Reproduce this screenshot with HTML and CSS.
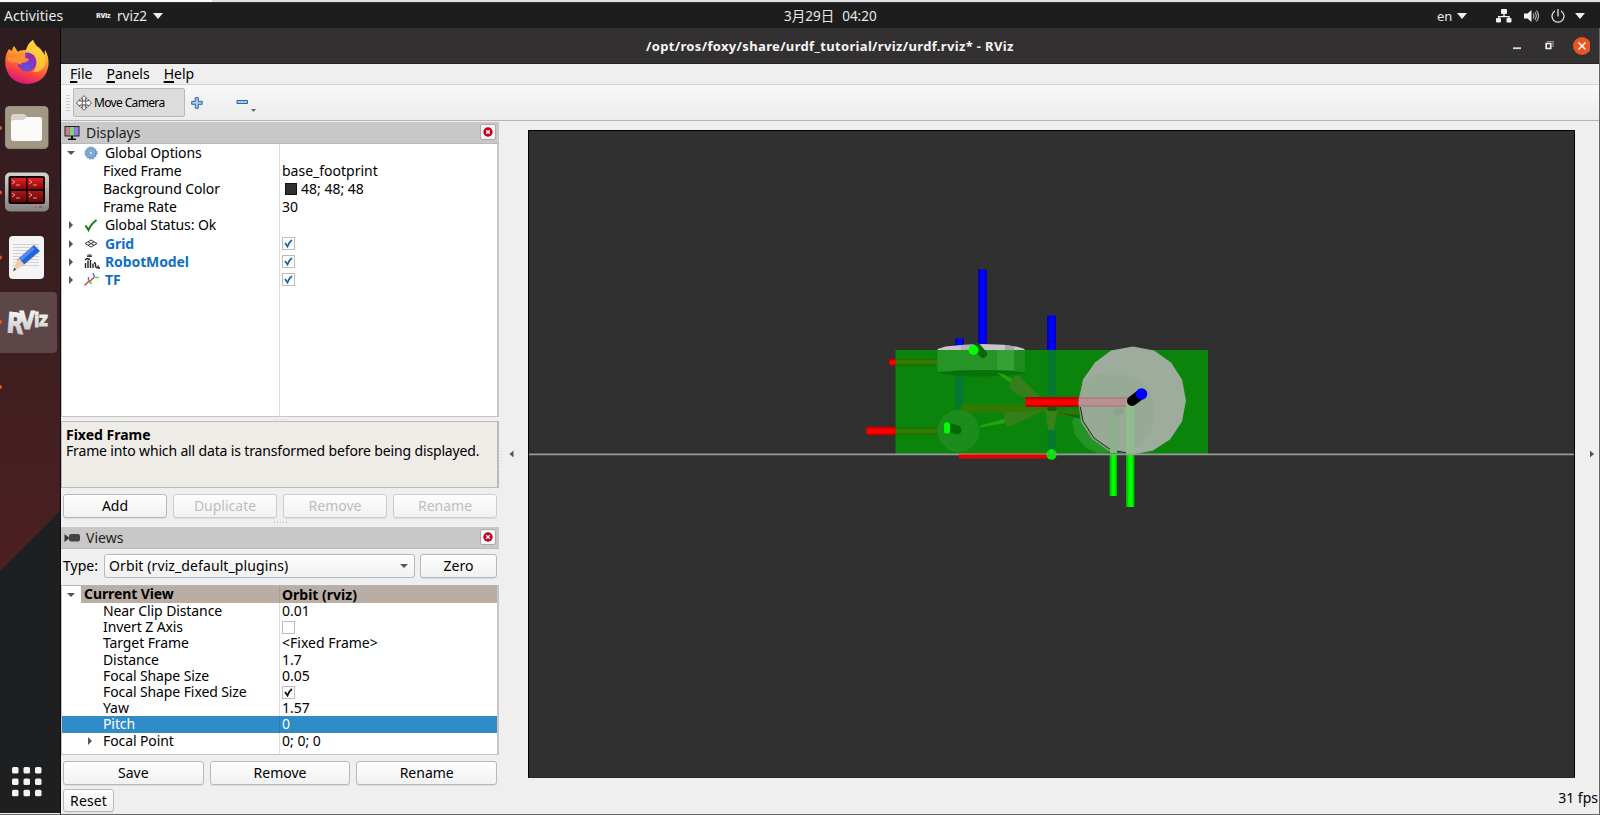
FILE: index.html
```html
<!DOCTYPE html>
<html lang="en">
<head>
<meta charset="utf-8">
<title>RViz</title>
<link rel="stylesheet" href="styles.css">
</head>
<body>
<div class="desktop">
  <div class="host-strip"><span></span></div>
  <header class="topbar">
    <span class="activities">Activities</span>
    <span class="app-menu"><i class="mini-logo">RViz</i><b class="app-name">rviz2</b>
      <svg width="10" height="6"><path d="M0 0h10l-5 6z" fill="#eee"/></svg></span>
    <span class="clock"><span>3月29日</span><span>04:20</span></span>
    <span class="status">
      <span class="lang">en</span>
      <svg class="caret" width="10" height="6"><path d="M0 0h10l-5 6z" fill="#eee"/></svg>
      <svg class="net" width="16" height="14" viewBox="0 0 16 14" fill="#f2f2f2"><rect x="5" y="0" width="6" height="5" rx="1"/><rect x="0" y="9" width="5" height="4.5" rx="1"/><rect x="10.500" y="9" width="5" height="4.500" rx="1"/><path d="M7.300 5h1.400v2h5v2h-1.400v-.8H3.300V9H2V7h5.300z"/></svg>
      <svg class="vol" width="15" height="14" viewBox="0 0 15 14"><path d="M0 4.500h3.500L7.500 1v12L3.500 9.500H0z" fill="#f2f2f2"/><path d="M9 4.500q1.800 2.500 0 5M10.800 3q3 4 0 8M12.500 1.500q4 5.500 0 11" fill="none" stroke="#bbb" stroke-width="1.100"/></svg>
      <svg class="power" width="14" height="14" viewBox="0 0 14 14" fill="none" stroke="#e4e4e4" stroke-width="1.300"><path d="M4 2a6 6 0 1 0 6 0M7 0v7.500"/></svg>
      <svg class="caret" width="10" height="6"><path d="M0 0h10l-5 6z" fill="#eee"/></svg>
    </span>
  </header>

  <div class="work">
    <aside class="dock">
      <svg width="61" height="786" viewBox="0 28 61 786">
        <defs>
          <linearGradient id="maroon" x1="0" y1="0" x2="0" y2="1"><stop offset="0" stop-color="#2f1c1f"/><stop offset=".5" stop-color="#3b1e20"/><stop offset="1" stop-color="#4c2022"/></linearGradient>
          <linearGradient id="fox" x1=".7" y1="0" x2=".35" y2="1"><stop offset="0" stop-color="#fff04c"/><stop offset=".4" stop-color="#ff9a2b"/><stop offset=".7" stop-color="#fb4a3f"/><stop offset="1" stop-color="#dc107a"/></linearGradient>
          <radialGradient id="globe" cx=".5" cy=".8"><stop offset="0" stop-color="#5a55e8"/><stop offset="1" stop-color="#8b2fb6"/></radialGradient>
          <linearGradient id="frame" x1="0" y1="0" x2="0" y2="1"><stop offset="0" stop-color="#d5d3d0"/><stop offset="1" stop-color="#85827f"/></linearGradient>
          <linearGradient id="pane" x1="0" y1="0" x2="0" y2="1"><stop offset="0" stop-color="#e02426"/><stop offset="1" stop-color="#8c0508"/></linearGradient>
          <linearGradient id="letters" x1="0" y1="0" x2="0" y2="1"><stop offset="0" stop-color="#fff"/><stop offset="1" stop-color="#bdbdbd"/></linearGradient>
        </defs>
        <path d="M0 28h61v785H0z" fill="#1e1f20"/>
        <path d="M0 28h61v482L0 571z" fill="url(#maroon)"/>
        <path d="M60.500 28v786" stroke="#0a0808"/>
        <!-- Firefox -->
        <path d="M33 40q-5 3-7 10-7 0-8 2l-4-6q-2 2-2 5l-3-2Q4 56 5.500 66 9 83 27 84q19-1 21.500-19Q49 56 45 50q-1 2 0 5-5-6-9-9-2-3-3-6z" fill="url(#fox)"/>
        <path d="M33 40q-5 4-7 11 9 2 10 10 1 7-3 11 9 1 12-7 2-9-5-17-5-3-7-8z" fill="#ffd23c" opacity=".75"/>
        <circle cx="27" cy="62" r="9.500" fill="url(#globe)"/>
        <path d="M7 58q4-2 9-1 4-6 9-4 1 2 0 5 4 0 4 2-3 3-8 3 2 4-5-1Q9 64 7 58z" fill="#ff8c2e"/>
        <!-- Files -->
        <rect x="5" y="106" width="43.500" height="43" rx="4.500" fill="#918b79"/>
        <rect x="5.500" y="106.500" width="42.500" height="41" rx="4" fill="#9f9986"/>
        <path d="M11 117q0-3 3-3h9q3 0 4 3h12q3 0 3 3v18q0 3-3 3H14q-3 0-3-3z" fill="#d8d4cc"/>
        <path d="M11 122q0-2 3-2h9l4-3h12q3 0 3 3v18q0 3-3 3H14q-3 0-3-3z" fill="#fbfaf9"/>
        <!-- Terminator -->
        <rect x="5" y="172.500" width="44" height="39" rx="5" fill="url(#frame)"/>
        <rect x="8.500" y="176" width="36.500" height="28" rx="2" fill="#160303"/>
        <g fill="url(#pane)"><path d="M11 178h15v11H11zM27.500 178H43v11H27.500z"/><path d="M11 191h15v11H11zM27.500 191H43v11H27.500z" opacity=".7"/></g>
        <path d="M12 180l3 2-3 2m4 1h4M29 180l3 2-3 2m4 1h4M12 193l3 2-3 2m4 1h4M29 193l3 2-3 2m4 1h4" fill="none" stroke="#f0a8a4" stroke-width=".9"/>
        <circle cx="35.500" cy="207" r="1" fill="#f33"/><path d="M39 207h3" stroke="#555"/>
        <!-- Text editor -->
        <rect x="9" y="236" width="35" height="43" rx="4" fill="#f4f4f4"/>
        <path d="M13 244.500h26M13 247.500h26M13 250.500h26M13 253.500h26M13 256.500h26M13 259.500h26M13 262.500h26M13 265.500h26" stroke="#c9c9c9" stroke-width=".8"/>
        <path d="M34 245l6 6-17.500 15-5.500-6z" fill="#2562dc"/><path d="M32.500 247l2.500 2-16 14-2-3z" fill="#5389f2"/>
        <path d="M18.500 258l6 6.500L13 271.500z" fill="#f0cba7"/><path d="M14.300 267.500l1.800 2-3.100 2z" fill="#444"/>
        <!-- RViz -->
        <path d="M0 292h53q4 0 4 4v53q0 4-4 4H0z" fill="#5d4647"/>
        <g class="logo" fill="url(#letters)" stroke="url(#letters)" stroke-width="1">
          <text transform="translate(6 332) scale(.8 1)"><tspan x="0" y="0" font-size="28" rotate="6">R</tspan><tspan x="17" y="-3" font-size="25">V</tspan><tspan x="35" y="-5" font-size="20">i</tspan><tspan x="41" y="-6" font-size="20">z</tspan></text>
        </g>
        <g fill="#e95420"><circle cx="0" cy="128" r="2"/><circle cx="0" cy="192.500" r="2"/><circle cx="0" cy="257.500" r="2"/><circle cx="0" cy="322" r="2"/><circle cx="0" cy="387" r="2"/></g>
        <g fill="#f3f3f3"><rect x="12" y="767" width="6.500" height="6.500" rx="1.500"/><rect x="23.500" y="767" width="6.500" height="6.500" rx="1.500"/><rect x="35" y="767" width="6.500" height="6.500" rx="1.500"/><rect x="12" y="778.500" width="6.500" height="6.500" rx="1.500"/><rect x="23.500" y="778.500" width="6.500" height="6.500" rx="1.500"/><rect x="35" y="778.500" width="6.500" height="6.500" rx="1.500"/><rect x="12" y="789.700" width="6.500" height="6.500" rx="1.500"/><rect x="23.500" y="789.700" width="6.500" height="6.500" rx="1.500"/><rect x="35" y="789.700" width="6.500" height="6.500" rx="1.500"/></g>
      </svg>
    </aside>

    <section class="window">
      <div class="titlebar">
        <span class="title">/opt/ros/foxy/share/urdf_tutorial/rviz/urdf.rviz* - RViz</span>
        <svg class="win-buttons" width="80" height="20" viewBox="0 0 80 20"><path d="M3 12.200h8" stroke="#ddd" stroke-width="1.800"/><path d="M36.200 7.500h4.500v5h-4.500z" fill="none" stroke="#f2f2f2" stroke-width="1.700"/><path d="M37 5.500h6V11" fill="none" stroke="#999" stroke-width="1.200"/><circle cx="72" cy="10" r="9" fill="#e95420"/><path d="M68.500 6.500l7 7m0-7l-7 7" stroke="#fff" stroke-width="1.500"/></svg>
      </div>
      <nav class="menubar"><span><u>F</u>ile</span><span><u>P</u>anels</span><span><u>H</u>elp</span></nav>
      <div class="toolbar">
        <span class="grip-v"></span>
        <div class="tool">
          <svg width="16" height="16" viewBox="0 0 16 16" fill="#fff" stroke="#444" stroke-width=".9"><path d="M8 .7l3 3H9.300V6h3V4.500L15.500 8l-3.200 3.500V10h-3v2.300H11l-3 3-3-3h1.700V10h-3v1.500L.5 8l3.200-3.500V6h3V3.700H5z"/><circle cx="8" cy="8" r="2"/></svg>
          <span>Move Camera</span>
        </div>
        <svg class="plus" width="12" height="12" viewBox="0 0 12 12"><path d="M4.300.7h3v3.600h3.900v3H7.300v3.900h-3V7.300H.7v-3h3.600z" fill="#a8c6e8" stroke="#2f63a8"/></svg>
        <svg class="minus" width="22" height="16" viewBox="0 0 22 16"><path d="M1 4.500h10.500v3H1z" fill="#a8c6e8" stroke="#2f63a8"/><path d="M15 13h5l-2.500 3z" fill="#666"/></svg>
      </div>

      <div class="main">
        <div class="side">
          <div class="panel-head">
            <svg width="16" height="16" viewBox="0 0 16 16"><path d="M.5 1h15v10.500H.5z" fill="#222"/><path d="M1.500 2h4.300v8.500H1.500z" fill="#c98186"/><path d="M5.800 2h4.400v8.500H5.800z" fill="#86cf86"/><path d="M10.200 2h4.300v8.500h-4.300z" fill="#8a87db"/><path d="M7 11h2v2.500h3V15H4v-1.500h3z" fill="#111"/></svg>
            <span>Displays</span>
            <i class="close"><svg width="10" height="10"><circle cx="5" cy="5" r="4.700" fill="#c4001f"/><path d="M3.200 3.200l3.600 3.600m0-3.600L3.200 6.800" stroke="#fff" stroke-width="1.300"/></svg></i>
          </div>
          <div class="tree displays">
            <div class="row"><span class="key l1"><i class="open"></i><svg width="14" height="14" viewBox="0 0 14 14"><circle cx="7" cy="7" r="5" fill="#8ab0dd" stroke="#477bb9"/><circle cx="7" cy="7" r="6" fill="none" stroke="#477bb9" stroke-dasharray="2 1.140"/><circle cx="7" cy="7" r="2" fill="#c9dcf0" stroke="#477bb9" stroke-width=".7"/></svg>Global Options</span><span class="val"></span></div>
            <div class="row"><span class="key l2">Fixed Frame</span><span class="val">base_footprint</span></div>
            <div class="row"><span class="key l2">Background Color</span><span class="val"><i class="swatch"></i>48; 48; 48</span></div>
            <div class="row"><span class="key l2">Frame Rate</span><span class="val">30</span></div>
            <div class="row"><span class="key l1"><i class="shut"></i><svg width="14" height="14" viewBox="0 0 14 14"><path d="M1.500 7.500l3 4.500Q7 6 12.500 2" fill="none" stroke="#157a1c" stroke-width="2"/></svg>Global Status: Ok</span><span class="val"></span></div>
            <div class="row on"><span class="key l1"><i class="shut"></i><svg width="14" height="14" viewBox="0 0 14 14" fill="none" stroke="#333"><path d="M1 6.500l6-3.500 6 3.500-6 3.500zM4 4.800l6 3.500M10 4.800L4 8.300"/></svg>Grid</span><span class="val"><i class="check blue"><svg width="9" height="9"><path d="M1 4l2.500 3.500Q5 3 8 1" fill="none" stroke="#1c5fa5" stroke-width="1.700"/></svg></i></span></div>
            <div class="row on"><span class="key l1"><i class="shut"></i><svg width="16" height="15" viewBox="0 0 16 15"><path d="M3.500 0h4v2h-4z" fill="#99a"/><path d="M3 2.200h5" stroke="#111" stroke-width="1.200"/><path d="M1 6l2-1.500 3 1M1.500 14V9M4 6.500V14M6.500 6v8M9 14V9.500M10 8.500q2 .5 1.500 3.500.5 2 2 1.500l1-2M13.500 14H16" fill="none" stroke="#222" stroke-width="1.400"/></svg>RobotModel</span><span class="val"><i class="check blue"><svg width="9" height="9"><path d="M1 4l2.500 3.500Q5 3 8 1" fill="none" stroke="#1c5fa5" stroke-width="1.700"/></svg></i></span></div>
            <div class="row on"><span class="key l1"><i class="shut"></i><svg width="16" height="15" viewBox="0 0 16 15" fill="none" stroke-width="1.400"><path d="M4.500 10V5M10.500 5.500L9 1" stroke="#6a60e8"/><path d="M4 10l-3.500 3.500M5 10l5-4.500" stroke="#e03426"/><path d="M4 10l4 1.500M10.500 5.500H15" stroke="#4ddb50"/></svg>TF</span><span class="val"><i class="check blue"><svg width="9" height="9"><path d="M1 4l2.500 3.500Q5 3 8 1" fill="none" stroke="#1c5fa5" stroke-width="1.700"/></svg></i></span></div>
            <div class="rest"></div>
          </div>
          <div class="grip-h"></div>
          <div class="help"><b>Fixed Frame</b><span>Frame into which all data is transformed before being displayed.</span></div>
          <div class="buttons four"><span class="btn">Add</span><span class="btn off">Duplicate</span><span class="btn off">Remove</span><span class="btn off">Rename</span></div>
          <div class="grip-h tall"></div>
          <div class="panel-head views-head">
            <svg width="16" height="16" viewBox="0 0 16 16"><path d="M.5 4l5 4-5 4z" fill="#333"/><rect x="5" y="4" width="11" height="7.500" rx="2" fill="#444"/></svg>
            <span>Views</span>
            <i class="close"><svg width="10" height="10"><circle cx="5" cy="5" r="4.700" fill="#c4001f"/><path d="M3.200 3.200l3.600 3.600m0-3.600L3.200 6.800" stroke="#fff" stroke-width="1.300"/></svg></i>
          </div>
          <div class="type-row"><span class="type">Type:</span><span class="combo"><span>Orbit (rviz_default_plugins)</span><i class="open"></i></span><span class="btn zero">Zero</span></div>
          <div class="tree views">
            <div class="row head"><span class="key l0"><i class="open"></i><span class="fill">Current View</span></span><span class="val">Orbit (rviz)</span></div>
            <div class="row"><span class="key l2">Near Clip Distance</span><span class="val">0.01</span></div>
            <div class="row"><span class="key l2">Invert Z Axis</span><span class="val"><i class="check"></i></span></div>
            <div class="row"><span class="key l2">Target Frame</span><span class="val">&lt;Fixed Frame&gt;</span></div>
            <div class="row"><span class="key l2">Distance</span><span class="val">1.7</span></div>
            <div class="row"><span class="key l2">Focal Shape Size</span><span class="val">0.05</span></div>
            <div class="row"><span class="key l2">Focal Shape Fixed Size</span><span class="val"><i class="check"><svg width="9" height="9"><path d="M1 4l2.500 3.500Q5 3 8 1" fill="none" stroke="#111" stroke-width="1.800"/></svg></i></span></div>
            <div class="row"><span class="key l2">Yaw</span><span class="val">1.57</span></div>
            <div class="row selected"><span class="key l2">Pitch</span><span class="val">0</span></div>
            <div class="row"><span class="key l3"><i class="shut"></i>Focal Point</span><span class="val">0; 0; 0</span></div>
            <div class="rest"></div>
          </div>
          <div class="buttons three"><span class="btn">Save</span><span class="btn">Remove</span><span class="btn">Rename</span></div>
          <span class="btn reset">Reset</span>
        </div>

        <div class="splitter"><i></i><svg width="5" height="8"><path d="M4.500 .5v7L.5 4z" fill="#555"/></svg></div>

        <div class="view">
          <svg class="scene" width="1047" height="648" viewBox="528 130 1047 648">
            <defs>
              <linearGradient id="bx"><stop offset="0" stop-color="#00a"/><stop offset=".4" stop-color="#00f"/><stop offset=".7" stop-color="#00f"/><stop offset="1" stop-color="#00a"/></linearGradient>
              <linearGradient id="gx"><stop offset="0" stop-color="#0a0"/><stop offset=".4" stop-color="#0f0"/><stop offset=".7" stop-color="#0f0"/><stop offset="1" stop-color="#0a0"/></linearGradient>
              <linearGradient id="rx" x1="0" y1="0" x2="0" y2="1"><stop offset="0" stop-color="#a00"/><stop offset=".4" stop-color="#f00"/><stop offset=".7" stop-color="#f00"/><stop offset="1" stop-color="#900"/></linearGradient>
            </defs>
            <path d="M528 130h1047v648H528z" fill="#303030"/>
            <path d="M528.500 778V130.500h1046V778" fill="none" stroke="#000"/>
            <rect x="978" y="269.500" width="9" height="78" fill="url(#bx)"/>
            <rect x="955" y="338.500" width="9" height="14" fill="url(#bx)"/>
            <path d="M937.500 349l8-2.500 18-1.800 20-.7 20 .8 14 2 7 2.200v3h-87z" fill="#c9c4c9"/>
            <path d="M961 345h19v6h-19z" fill="#b5b0b5"/><path d="M1005 345l9 1.500v5h-9z" fill="#aaa5aa"/>
            <rect x="1047" y="315.500" width="9" height="36" fill="url(#bx)"/>
            <rect x="895.500" y="350" width="312.500" height="104" fill="#0b840b"/>
            <!-- translucent parts behind the chassis face -->
            <path d="M895.500 358.500H940v7.500h-44.500zM895.500 427.500H940v7.500h-44.500z" fill="#2f7c02"/>
            <path d="M895.500 358.500H940v1.500h-44.500zM895.500 427.500H940v1.500h-44.500zM895.500 364.500H940v1.500h-44.500zM895.500 433.500H940v1.500h-44.500z" fill="#276a03"/>
            <path d="M955 373h9v37h-9zM1047.500 350h8.500v45h-8.500zM1047.500 430h8.500v23h-8.500z" fill="#04792f"/>
            <path d="M963 404.500h90v8h-89l-4-4z" fill="#317a02"/>
            <path d="M1052 410h68v6h-68z" fill="#2b7806"/>
            <path d="M937.500 350h87v22h-87z" fill="#269426"/>
            <path d="M997 350h17v20h-17z" fill="#35a035"/><path d="M1014 350h10.500v21H1014z" fill="#1f8a1f"/>
            <path d="M937.500 372q40-4 90 0-14 4-44 4.500-35 0-46-4.500z" fill="#087208"/>
            <circle cx="958.500" cy="431" r="21" fill="#1b8c1b"/>
            <g fill="none" stroke="#2b962b" opacity=".3"><ellipse cx="958.500" cy="431" rx="7" ry="21"/><ellipse cx="958.500" cy="431" rx="15" ry="21"/><path d="M938 431h41M940 422h37M940 440h37"/></g>
            <path d="M997 373l6 1 11 6-2 4zM980 425.500l26-7 1 4-27 5z" fill="#27a30c"/>
            <path d="M1009 387q1-9 9-12l26 25q-13-2-21-3-10-4-14-10z" fill="#347f1c"/>
            <path d="M1004.500 412.500q20-1 37-2-6 5-34 16.500-5-6-3-14.500z" fill="#347f1c"/>
            <path d="M1045.500 410q6-3 12 0l-3.500 20h-6z" fill="#38821c"/><path d="M1047 407h10l-1 4h-8z" fill="#0a6008"/>
            <path d="M1074 418l25-7v32l14 8-13 3-14-6-11-13-3-14z" fill="#239323"/>
            <path d="M1058 413l20 2 4 4z" fill="#0b6a0b"/>
            <path d="M977 347l6 7" stroke="#066906" stroke-width="8" stroke-linecap="round"/><circle cx="973.500" cy="350" r="5" fill="#0f0"/>
            <path d="M951 428l6 2" stroke="#066906" stroke-width="9" stroke-linecap="round"/><rect x="944" y="422.500" width="6" height="11" rx="2.500" fill="#0f0"/>
            <!-- exposed axes -->
            <rect x="889.500" y="358.500" width="6" height="7.500" fill="url(#rx)"/>
            <rect x="866.500" y="426.500" width="29" height="9" fill="url(#rx)"/>
            <rect x="1025.500" y="397" width="56" height="10" fill="url(#rx)"/>
            <rect x="1109.500" y="454" width="7.500" height="42" fill="url(#gx)"/>
            <path d="M1133 346.500l21 4 17 12 11 17 4 21-4 21-12 18-17 11-20 4-22-4-17-12-11-17-4-21 4-21 12-17 16-12z" fill="#9eac9e"/>
            <path d="M1083 382q10-9 30-9 18 0 33 13 12 18 7 38-3 15-17 23l-7 6-20-2-17-12-11-17-3-21z" fill="#94aa94" opacity=".8"/>
            <path d="M1079 400l4 21 11 17 17 12 22 4" fill="none" stroke="#222" stroke-width="1"/>
            <path d="M1079 397h50v10h-50z" fill="#b99091"/><path d="M1079 397h50v2h-50zM1079 405h50v2h-50z" fill="#aa8585"/>
            <path d="M1126 401h8.500v53h-8.500z" fill="#8fbd8f"/><path d="M1110 412h7v41h-7z" fill="#8db18d"/><path d="M1112 410l10-4 2 6-8 5z" fill="#8aa48e"/>
            <rect x="1126" y="454" width="8.500" height="53" fill="url(#gx)"/>
            <path d="M1132 401l8-6" stroke="#000" stroke-width="10" stroke-linecap="round"/><circle cx="1141.500" cy="394" r="5.800" fill="#00f"/>
            <path d="M529 454.300h1045" stroke="#999" stroke-width="1.700"/>
            <rect x="959" y="454.500" width="90" height="4" fill="#e80000"/><rect x="959" y="451.500" width="90" height="1.500" fill="#3b6d02"/>
            <circle cx="1051.500" cy="454.500" r="5.200" fill="#08e208"/><path d="M1051.500 449v5" stroke="#0f0" stroke-width="2"/><path d="M1046 454h11" stroke="#65a665"/>
            <path d="M528 777.500h1047" stroke="#272727"/>
          </svg>
          <div class="fps">31 fps</div>
        </div>
        <div class="right-edge"><svg width="5" height="8"><path d="M0 .5v7L4 4z" fill="#555"/></svg></div>
      </div>
    </section>
  </div>
</div>
</body>
</html>
```

FILE: styles.css
```css
* { box-sizing: border-box; }
body { margin: 0; }
.desktop {
  width: 1600px; height: 815px; overflow: hidden;
  display: flex; flex-direction: column;
  font: 14px/18px "Noto Sans", "Noto Sans CJK SC", sans-serif;
  color: #000; background: #efefef;
  border-bottom: 1px solid #666;
  white-space: nowrap;
}
i { font-style: normal; }
svg { flex: none; display: block; }

.host-strip { height: 3px; background: #dfdfe5; border-bottom: 1px solid #333; flex: none; }
.host-strip span { display: block; width: 212px; height: 2px; background: #fafafa; }

.topbar {
  height: 25px; background: #1d1d1d; color: #e8e8e8;
  display: grid; grid-template-columns: 96px 688px 100px 716px; align-items: center;
  font-size: 13px; flex: none;
}
.activities { padding-left: 4px; font-size: 14px; letter-spacing: .1px; }
.app-menu { display: flex; align-items: center; }
.mini-logo { width: 21px; font-size: 7px; font-weight: 900; letter-spacing: -.3px; line-height: 10px; }
.app-name { font-weight: 400; width: 36px; font-size: 13.500px; }
.clock { display: flex; gap: 8px; font-size: 13.500px; }
.status { display: flex; align-items: center; padding-left: 553px; }
.lang { width: 20px; }
.net { margin-left: 29px; }
.vol { margin-left: 12px; }
.power { margin: 0 10px 0 12px; }

.work { display: flex; flex: 1; min-height: 0; }
.dock { width: 61px; flex: none; }
.logo { font-family: "DejaVu Sans", sans-serif; font-weight: 700; }

.window { flex: 1; display: flex; flex-direction: column; border-right: 1px solid #666; min-width: 0; }
.titlebar {
  height: 36px; background: #333031; border-bottom: 1px solid #222; color: #f5f5f5;
  display: flex; align-items: center; font-weight: 700; font-size: 13px; letter-spacing: .34px; flex: none;
}
.title { padding-left: 585px; width: 1453px; }
.win-buttons { margin-left: -4px; }
.menubar { height: 20px; display: flex; padding-left: 9px; gap: 14px; line-height: 20px; font-size: 14px; flex: none; }
.menubar u { text-underline-offset: 2px; text-decoration-thickness: 1.500px; }
.toolbar {
  height: 37px; border-top: 1px solid #d4d4d4; border-bottom: 1px solid #b5b5b5;
  background: linear-gradient(#f8f8f8, #ececec);
  display: flex; align-items: center; padding-left: 5px; flex: none;
}
.grip-v { width: 4px; height: 17px; background: radial-gradient(circle, #ccc 0 .6px, transparent 1px) 0 0 / 2px 3px; }
.tool {
  margin-left: 3px; width: 112px; height: 29px; border: 1px solid #b9b9b9; border-radius: 2px; background: #dcdcdc;
  display: flex; align-items: center; padding-left: 2px; gap: 2px; font-size: 12px; letter-spacing: -.65px;
}
.plus { margin-left: 6px; }
.minus { margin: 2px 0 0 33px; }

.main { flex: 1; display: flex; min-height: 0; }
.side { width: 438px; display: flex; flex-direction: column; padding-top: 1px; flex: none; }
.panel-head {
  height: 22px; flex: none; background: #c8c8c8; border-bottom: 1px solid #b9b9b9;
  display: flex; align-items: center; padding: 1px 3px 0 3px; gap: 6px; font-size: 14px; color: #222;
}
.close {
  margin: -2px 0 0 auto; width: 16px; height: 16px; background: #f6f6f6; border: 1px solid #aaa; border-radius: 2px;
  display: flex; align-items: center; justify-content: center;
}
.tree { background: #fff; border: solid #c6c6c6; border-width: 0 2px 1px 1px; display: flex; flex-direction: column; flex: none; }
.displays { height: 273px; }
.views { height: 170px; border-top: 1px solid #b5b5b5; margin-top: 7px; }
.row { display: flex; height: 18.100px; flex: none; }
.views .row { height: 16.200px; line-height: 16px; }
.key { width: 218px; border-right: 1px solid #dedede; display: flex; align-items: center; flex: none; letter-spacing: -.1px; }
.val { flex: 1; padding-left: 2px; display: flex; align-items: center; }
.l1 { padding-left: 5px; }
.l1 i { margin-right: 9px; }
.l1 svg { width: 16px; margin-right: 5px; }
.l1 svg[width="14"] { padding-right: 2px; }
.l2 { padding-left: 41px; }
.l3 { padding-left: 24px; }
.l3 i { margin-right: 11px; }
.l0 i { margin: 0 6px 0 5px; }
.l0 .fill { flex: 1; background: #b9ada4; padding-left: 3px; height: 100%; }
.open { width: 8px; border: solid transparent; border-width: 4px 4px 0; border-top-color: #555; }
.shut { width: 4px; margin-left: 2px; border: solid transparent; border-width: 4px 0 4px 4px; border-left-color: #555; }
.l1 .shut { margin-right: 11px; }
.views .head { font-weight: 700; height: 17px; }
.head .val { background: #b9ada4; }
.head .key { border-color: #aaa098; }
.on .key { color: #0f70c4; font-weight: 700; }
.rest { flex: 1; width: 218px; border-right: 1px solid #dedede; }
.selected .key, .selected .val { background: #308cc6; color: #fff; }
.selected .key { border-color: #2a7fb6; }
.swatch { width: 12px; height: 12px; background: #303030; border: 1px solid #111; margin: 0 4px 0 3px; }
.check { width: 13px; height: 13px; border: 1px solid #bcbcbc; background: #fff; display: flex; align-items: center; justify-content: center; }
.grip-h { height: 4px; flex: none; background: radial-gradient(circle, #ccc 0 .6px, transparent 1px) 50% 1px / 3px 3px; width: 17px; margin-left: 211px; }
.grip-h.tall { height: 9px; background: radial-gradient(circle, #ccc 0 .6px, transparent 1px) 50% 1px / 3px 6px; }
.help { height: 67px; flex: none; border: 1px solid #bbb; border-right-width: 2px; background: #efebe7; padding: 5px 4px; line-height: 16px; display: flex; flex-direction: column; }
.help span { letter-spacing: -.15px; }
.buttons { display: flex; gap: 6px; padding: 0 2px; height: 24px; flex: none; }
.four { margin-top: 6px; }
.three { margin-top: 6px; }
.btn {
  flex: 1; height: 24px; border: 1px solid #b8b8b8; border-radius: 3px; background: linear-gradient(#fefefe, #f1f1f1);
  display: flex; align-items: center; justify-content: center; font-size: 14px; box-shadow: 0 1px 0 #ddd;
}
.off { color: #bebebe; border-color: #cdcdcd; }
.type-row { display: flex; height: 24px; margin-top: 5px; padding: 0 2px; align-items: center; flex: none; }
.type { width: 41px; font-size: 14px; }
.combo { width: 311px; height: 24px; border: 1px solid #b8b8b8; border-radius: 3px; background: linear-gradient(#fefefe, #f1f1f1); padding: 0 6px 0 4px; display: flex; align-items: center; justify-content: space-between; letter-spacing: .1px; }
.zero { margin-left: 5px; }
.reset { flex: none; width: 51px; margin: 4px 0 0 2px; height: 23px; letter-spacing: .1px; }

.splitter { width: 29px; display: flex; flex: none; padding-top: 329px; }
.splitter i { margin: 0 4px 0 1px; width: 4px; height: 17px; background: radial-gradient(circle, #ccc 0 .6px, transparent 1px) 0 0 / 3px 3px; }
.splitter svg { margin-left: 1px; }
.view { width: 1047px; padding-top: 9px; display: flex; flex-direction: column; flex: none; }
.fps { margin: 11px -23px 0 auto; font-size: 14px; }
.right-edge { padding: 329px 0 0 15px; }
```
